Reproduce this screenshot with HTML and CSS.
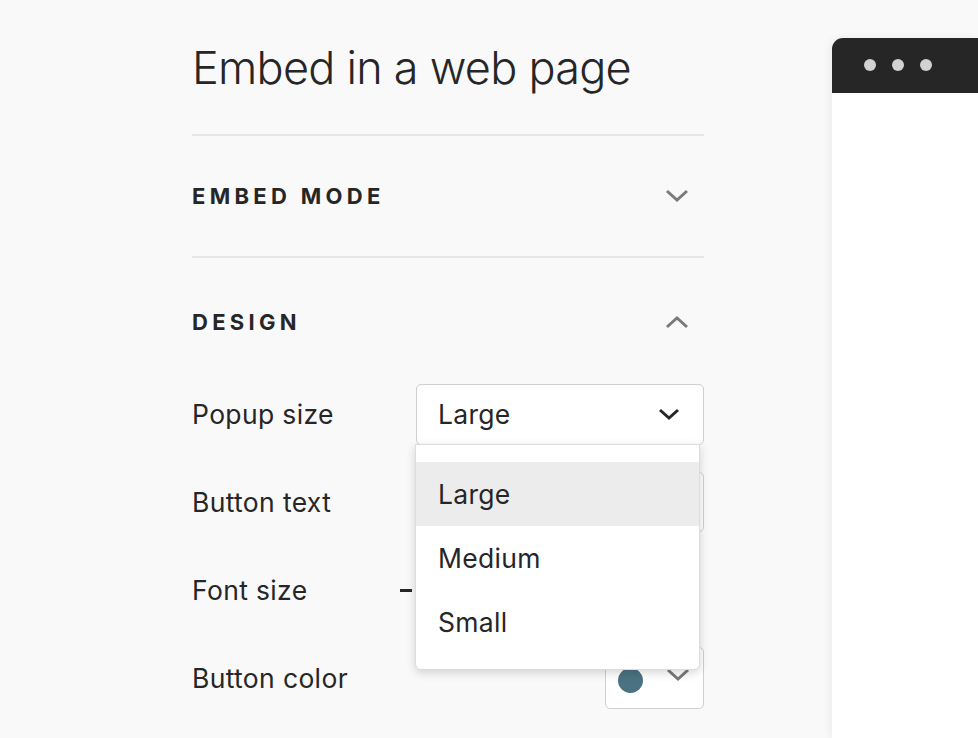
FILE: index.html
```html
<!DOCTYPE html>
<html lang="en">
<head>
<meta charset="utf-8">
<title>Embed in a web page</title>
<link rel="stylesheet" href="styles.css">
</head>
<body>
<div class="page">
  <div class="panel">
    <h1 class="title">Embed in a web page</h1>
    <div class="section">
      <div class="section-head">
        <span class="section-title">EMBED MODE</span>
        <svg class="chev chev-gray" width="24" height="14" viewBox="0 0 24 14"><path d="M2 2 L12 11 L22 2" fill="none" stroke="currentColor" stroke-width="3"/></svg>
      </div>
    </div>
    <div class="section open">
      <div class="section-head">
        <span class="section-title">DESIGN</span>
        <svg class="chev chev-gray" width="24" height="14" viewBox="0 0 24 14"><path d="M2 12 L12 3 L22 12" fill="none" stroke="currentColor" stroke-width="3"/></svg>
      </div>
      <div class="rows">
        <div class="row">
          <span class="label">Popup size</span>
          <div class="select-wrap">
            <div class="select">
              <span>Large</span>
              <svg class="chev chev-dark" width="24" height="14" viewBox="0 0 24 14"><path d="M3 3 L12 11 L21 3" fill="none" stroke="currentColor" stroke-width="3"/></svg>
            </div>
            <ul class="menu">
              <li class="item active">Large</li>
              <li class="item">Medium</li>
              <li class="item">Small</li>
            </ul>
          </div>
        </div>
        <div class="row">
          <span class="label">Button text</span>
          <div class="input"></div>
        </div>
        <div class="row">
          <span class="label">Font size</span>
          <div class="stepper"><span class="minus"></span></div>
        </div>
        <div class="row">
          <span class="label">Button color</span>
          <div class="color">
            <span class="swatch"></span>
            <svg class="chev chev-gray chev-up" width="24" height="14" viewBox="0 0 24 14"><path d="M2 2 L12 11 L22 2" fill="none" stroke="currentColor" stroke-width="3"/></svg>
          </div>
        </div>
      </div>
    </div>
  </div>
  <div class="browser">
    <div class="browser-bar">
      <span class="dot"></span><span class="dot"></span><span class="dot"></span>
    </div>
    <div class="browser-body"></div>
  </div>
</div>
</body>
</html>
```

FILE: styles.css
```css
html, body {
  margin: 0;
  padding: 0;
  background: #f9f9f9;
  overflow: hidden;
}
body {
  font-family: Inter, "Noto Sans", "Liberation Sans", sans-serif;
  color: #262627;
  width: 978px;
  height: 738px;
}
.page {
  display: flex;
  padding-left: 192px;
  height: 738px;
  box-sizing: border-box;
}
.panel {
  width: 512px;
  flex: none;
}
.title {
  margin: 0;
  padding-top: 38px;
  height: 136px;
  box-sizing: border-box;
  font-size: 45px;
  font-weight: 300;
  line-height: 60px;
  letter-spacing: -0.75px;
  color: #262627;
  border-bottom: 2px solid #e6e6e6;
}
.section {
  border-bottom: 2px solid #e6e6e6;
}
.section.open {
  border-bottom: none;
}
.section-head {
  display: flex;
  align-items: center;
  justify-content: space-between;
  height: 120px;
  padding-right: 15px;
}
.section.open .section-head {
  height: 128px;
  margin-bottom: -15px;
}
.section-title {
  font-size: 22px;
  font-weight: 700;
  letter-spacing: 4.3px;
  color: #262627;
}
.chev { display: block; }
.chev-gray { color: #7a7a7a; }
.chev-dark { color: #262627; }
.chev-up { margin-top: -6px; }
.rows {
  display: flex;
  flex-direction: column;
}
.row {
  display: flex;
  align-items: center;
  justify-content: space-between;
  height: 88px;
}
.row:first-child { margin-top: -1px; }
.label {
  font-size: 26.5px;
  font-weight: 400;
  letter-spacing: 0.35px;
  color: #262627;
}
.select-wrap {
  position: relative;
  width: 288px;
}
.select {
  height: 61px;
  box-sizing: border-box;
  border: 1px solid #cfcfcf;
  border-radius: 5px;
  background: #fff;
  display: flex;
  align-items: center;
  justify-content: space-between;
  padding: 0 22px 0 21px;
  font-size: 26.5px;
  letter-spacing: 0.3px;
}
.menu {
  position: absolute;
  top: 60px;
  left: -1px;
  width: 285px;
  margin: 0;
  padding: 17px 0 15px;
  list-style: none;
  background: #fff;
  border: 1px solid #dcdcdc;
  border-radius: 0 0 6px 6px;
  box-shadow: 0 3px 10px rgba(0, 0, 0, 0.16);
  box-sizing: border-box;
  z-index: 5;
}
.item {
  height: 64px;
  display: flex;
  align-items: center;
  padding-left: 22px;
  font-size: 26.5px;
  letter-spacing: 0.3px;
}
.item.active { background: #ececec; }
.input {
  width: 288px;
  height: 60px;
  box-sizing: border-box;
  border: 1px solid #cfcfcf;
  border-radius: 5px;
  background: #fff;
}
.stepper {
  width: 304px;
  height: 60px;
  display: flex;
  align-items: center;
}
.minus {
  display: block;
  width: 12px;
  height: 3px;
  background: #262627;
}
.color {
  width: 99px;
  height: 62px;
  box-sizing: border-box;
  border: 1px solid #cfcfcf;
  border-radius: 5px;
  background: #fff;
  display: flex;
  align-items: center;
  justify-content: space-between;
  padding: 0 13px 0 12px;
}
.swatch {
  width: 25px;
  height: 25px;
  border-radius: 50%;
  background: #4a7282;
  margin-top: 4px;
}
.browser {
  flex: 1;
  margin-left: 128px;
  margin-top: 38px;
  background: #fff;
  border-top-left-radius: 11px;
  box-shadow: -2px 0 8px rgba(0, 0, 0, 0.06);
  overflow: hidden;
}
.browser-bar {
  height: 55px;
  background: #262626;
  display: flex;
  align-items: center;
  gap: 16px;
  padding-left: 32px;
  padding-bottom: 1px;
  box-sizing: border-box;
}
.dot {
  width: 12px;
  height: 12px;
  border-radius: 50%;
  background: #d2d2d2;
}
```
